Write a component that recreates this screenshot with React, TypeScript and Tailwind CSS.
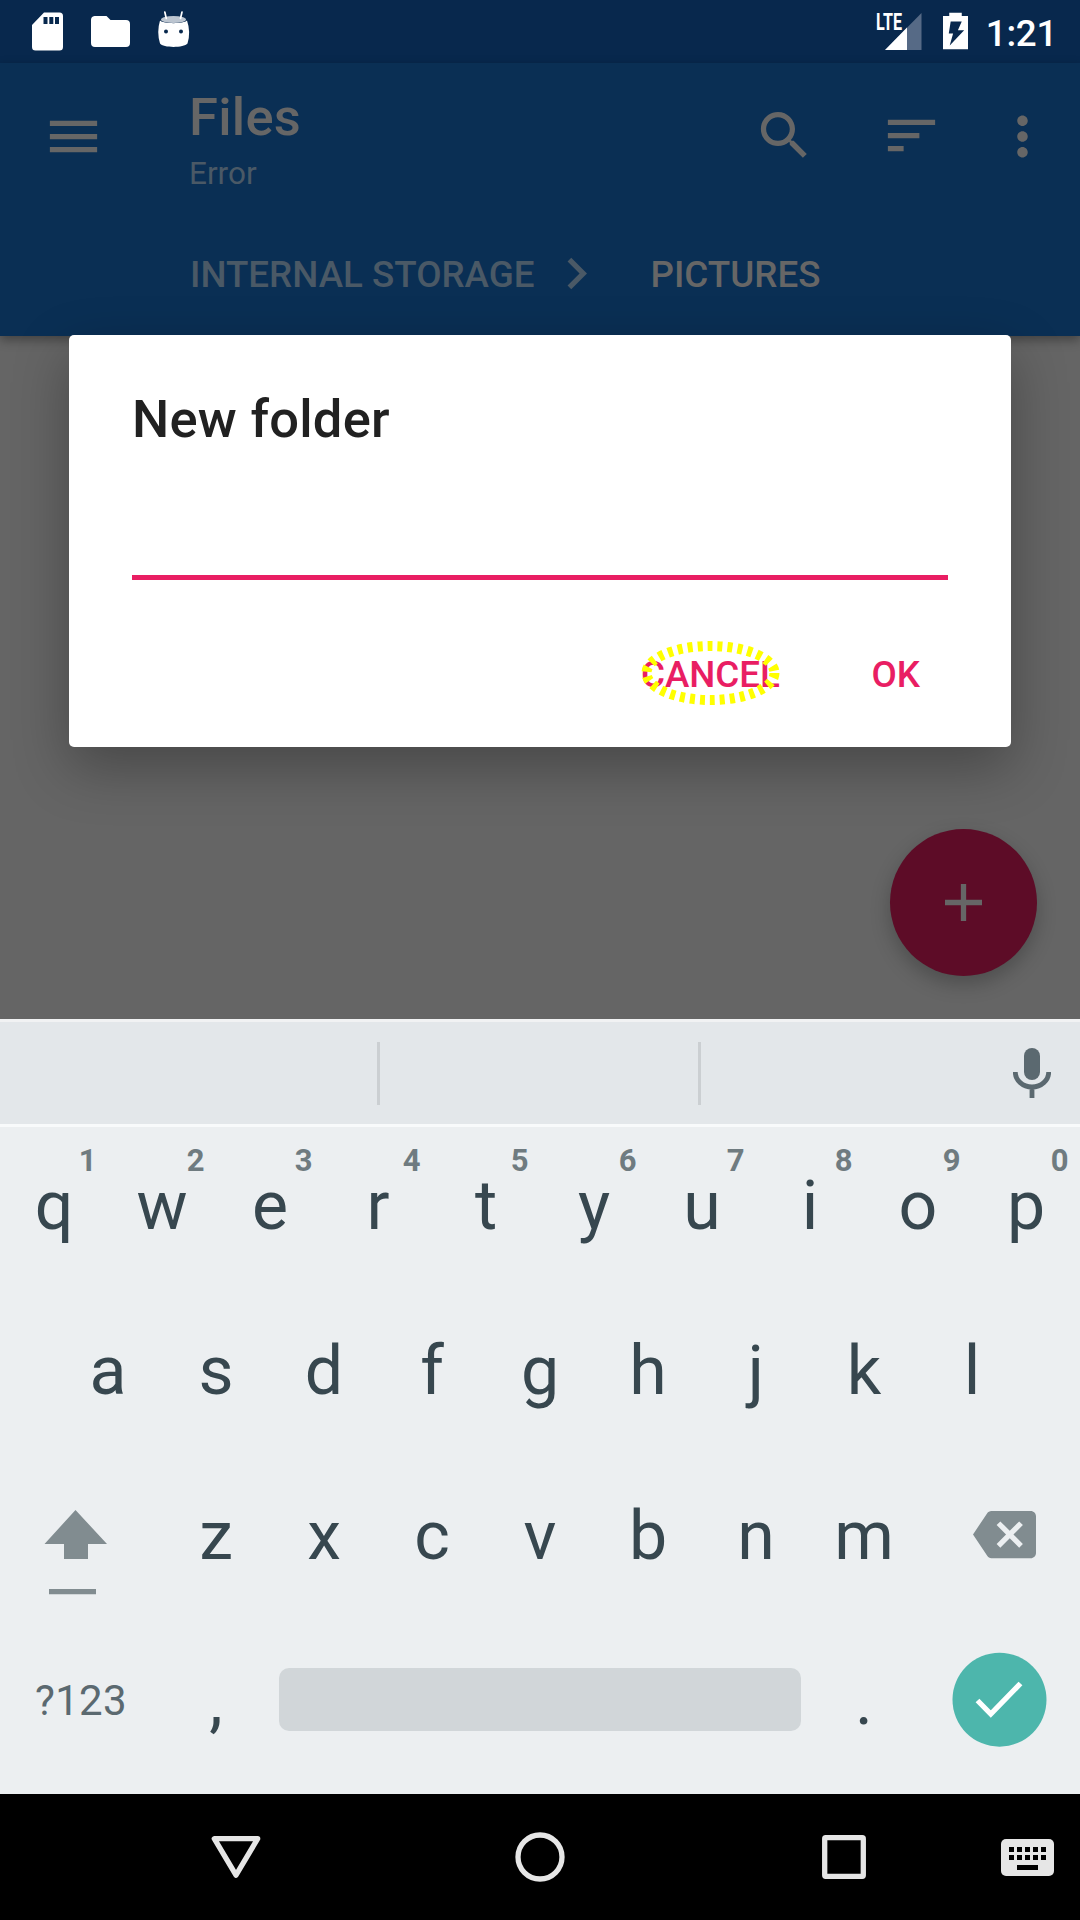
import type { ReactNode } from 'react';

const MENU = 'M3 18h18v-2H3v2zm0-5h18v-2H3v2zm0-7v2h18V6H3z';
const SEARCH =
  'M15.5 14h-.79l-.28-.27C15.41 12.59 16 11.11 16 9.5 16 5.91 13.09 3 9.5 3S3 5.91 3 9.5 5.91 16 9.5 16c1.61 0 3.09-.59 4.23-1.57l.27.28v.79l5 4.99L20.49 19l-4.99-5zm-6 0C7.01 14 5 11.99 5 9.5S7.01 5 9.5 5 14 7.01 14 9.5 11.99 14 9.5 14z';
const SORT = 'M3 18h6v-2H3v2zM3 6v2h18V6H3zm0 7h12v-2H3v2z';
const MORE =
  'M12 8c1.1 0 2-.9 2-2s-.9-2-2-2-2 .9-2 2 .9 2 2 2zm0 2c-1.1 0-2 .9-2 2s.9 2 2 2 2-.9 2-2-.9-2-2-2zm0 6c-1.1 0-2 .9-2 2s.9 2 2 2 2-.9 2-2-.9-2-2-2z';
const CHEVRON = 'M10 6L8.59 7.41 13.17 12l-4.58 4.59L10 18l6-6z';
const BACKSPACE =
  'M22 3H7c-.69 0-1.23.35-1.59.88L0 12l5.41 8.11c.36.53.9.89 1.59.89h15c1.1 0 2-.9 2-2V5c0-1.1-.9-2-2-2zm-3 12.59L17.59 17 14 13.41 10.41 17 9 15.59 12.59 12 9 8.41 10.41 7 14 10.59 17.59 7 19 8.41 15.41 12 19 15.59z';

function Icon({ d, className }: { d: string; className: string }) {
  return (
    <svg viewBox="0 0 24 24" fill="currentColor" className={`size-[63px] shrink-0 ${className}`}>
      <path d={d} />
    </svg>
  );
}

function StatusBar() {
  return (
    <header className="flex h-[63px] items-start bg-[#08284d] text-white">
      <svg viewBox="0 0 200 63" className="h-[63px] w-[200px]" fill="currentColor">
        <path
          fillRule="evenodd"
          d="M44 12.5h15.500a3.500 3.500 0 0 1 3.500 3.500v31a3.500 3.500 0 0 1-3.500 3.500h-24a3.500 3.500 0 0 1-3.500-3.500V25zM43.500 17v7h4v-7zM49.300 17v7h4v-7zM55 17v7h4v-7z"
        />
        <path d="M94.500 16h12l4 4H126a4 4 0 0 1 4 4v19a4 4 0 0 1-4 4H95a4 4 0 0 1-4-4V20a4 4 0 0 1 3.500-4z" />
        <path d="M160 20.500C163 24 184 24 187 20.500Q191 32 187.500 43.500C184 48 163 48 160 43.500Q156.500 32 160 20.500z" />
        <ellipse cx="173.500" cy="19.500" rx="12.500" ry="3.600" fill="#bcc5d0" />
        <path d="M164.800 12l1.500 6.500M182 12l-1.500 6.500" stroke="currentColor" strokeWidth="1.700" strokeLinecap="round" />
        <circle cx="166" cy="31.500" r="2" fill="#08284d" />
        <circle cx="181" cy="31.500" r="2" fill="#08284d" />
      </svg>
      <div className="ml-auto flex h-[63px] items-center pr-[23px]">
        <div className="relative h-[63px] w-[50px]">
          <span className="absolute left-0 top-[12px] origin-left scale-x-[0.7] text-[23px] font-bold leading-[22px]">LTE</span>
          <svg viewBox="0 0 50 63" className="h-[63px] w-[50px]">
            <path d="M45.500 13v37H9z" fill="#566a86" />
            <path d="M31 27.500V50H9z" fill="#fff" />
          </svg>
        </div>
        <svg viewBox="0 0 26 38" className="ml-[17px] mt-[-1px] h-[38px] w-[25px]">
          <path d="M6.500 0h13v3.500H26V38H0V3.500h6.500z" fill="#fff" />
          <path d="M8 9h11.500l-4 9.300H22L7 34l3.500-12.500H6z" fill="#08284d" />
        </svg>
        <span className="ml-[18px] mt-[5px] text-[36.750px] font-medium leading-[44px] tracking-[-0.300px]">1:21</span>
      </div>
    </header>
  );
}

function AppBar() {
  return (
    <div className="h-[273px] bg-[#0a2f54] text-[#666] shadow-[0_4px_10px_rgba(0,0,0,0.35)]">
      <div className="flex h-[147px] pt-[42px]">
        <Icon d={MENU} className="ml-[42px]" />
        <div className="-mt-[19px] ml-[84px] flex flex-col">
          <h1 className="text-[52.500px] font-medium leading-[62px] tracking-[0.250px]">Files</h1>
          <p className="mt-[7px] text-[31.500px] leading-[37px] text-[#4a5966]">Error</p>
        </div>
        <Icon d={SEARCH} className="-mt-px ml-auto" />
        <Icon d={SORT} className="-mt-px ml-[64px]" />
        <Icon d={MORE} className="ml-[48px] mr-[26px]" />
      </div>
      <nav className="flex h-[126px] items-center pl-[190px] pt-[3px] text-[36.750px] font-medium">
        <span className="text-[#4a5966]">INTERNAL STORAGE</span>
        <Icon d={CHEVRON} className="-mt-[2px] ml-[11px] text-[#4a5966]" />
        <span className="ml-[42px]">PICTURES</span>
      </nav>
    </div>
  );
}

function Dialog() {
  return (
    <div className="absolute left-[69px] top-[335px] flex h-[412px] w-[942px] flex-col rounded-[5px] bg-white px-[63px] pt-[53px] text-[#e91e63] shadow-[0_20px_56px_rgba(0,0,0,0.3)]">
      <h2 className="text-[52.500px] font-medium leading-[62px] tracking-[0.250px] text-[#212121]">New folder</h2>
      <div className="mt-[125px] h-[5px] bg-[#e91e63]" />
      <div className="mt-[73px] flex justify-end pr-[28px] text-[36.750px] font-medium leading-[44px]">
        <span className="relative">
          CANCEL
          <svg viewBox="0 0 140 66" className="absolute -left-px -top-[13px] h-[66px] w-[140px]" fill="none">
            <ellipse cx="70.500" cy="33" rx="64" ry="27" stroke="#ff0" strokeWidth="10" strokeDasharray="5 5" />
          </svg>
        </span>
        <span className="ml-[91.500px]">OK</span>
      </div>
    </div>
  );
}

function Key({ label, hint }: { label: string; hint?: string }) {
  return (
    <div className="relative flex w-[108px] justify-center">
      <span>{label}</span>
      {hint && (
        <span className="absolute right-[11.500px] top-[-23px] text-[31px] font-bold leading-[36px] text-[#6f7b80]">{hint}</span>
      )}
    </div>
  );
}

function Row({ children }: { children: ReactNode }) {
  return <div className="flex h-[165px] justify-center leading-[80px]">{children}</div>;
}

function Keyboard() {
  return (
    <section className="h-[775px] bg-[#eceff1] text-[#37474f]">
      <div className="flex h-[108px] items-center border-b-[3px] border-t-[3px] border-b-[#f8fafb] border-t-[#f1f2f3] bg-[#e3e7ea]">
        <div className="ml-[377px] h-[63px] w-[3px] bg-[#cbcfd2]" />
        <div className="ml-[318px] h-[63px] w-[3px] bg-[#cbcfd2]" />
        <svg viewBox="0 0 38 51" className="ml-auto mr-[29px] h-[51px] w-[38px] text-[#5b6970]" fill="none" stroke="currentColor">
          <rect x="11" y="0" width="16" height="32" rx="8" fill="currentColor" stroke="none" />
          <path d="M2.300 24a16.700 15 0 0 0 33.400 0M19 39v11" strokeWidth="4.800" />
        </svg>
      </div>
      <div className="pt-[39px] text-[68px]">
        <Row>
          {'qwertyuiop'.split('').map((k, i) => (
            <Key key={k} label={k} hint={String((i + 1) % 10)} />
          ))}
        </Row>
        <Row>
          {'asdfghjkl'.split('').map((k) => (
            <Key key={k} label={k} />
          ))}
        </Row>
        <Row>
          <div className="w-[162px]">
            <svg viewBox="0 0 162 100" className="h-[100px] w-[162px]" fill="#818c90">
              <path d="M75.500 14l31.500 34H88v15H64V48H44.500zM49 93h47v5.300H49z" />
            </svg>
          </div>
          {'zxcvbnm'.split('').map((k) => (
            <Key key={k} label={k} />
          ))}
          <div className="w-[162px] pl-[55px] pt-[7px]">
            <Icon d={BACKSPACE} className="text-[#818c90]" />
          </div>
        </Row>
        <Row>
          <div className="w-[162px] pl-[35px] text-[42px] tracking-[0.300px] text-[#5b6970]">?123</div>
          <Key label="," />
          <div className="mx-[9px] mt-[7px] h-[63px] w-[522px] rounded-[10px] bg-[#d1d6d9]" />
          <Key label="." />
          <div className="w-[162px] pl-[33.500px]">
            <svg viewBox="0 0 95 95" className="-mt-[9px] size-[95px]">
              <circle cx="47.500" cy="47.700" r="47" fill="#4db6ac" />
              <path d="M25.500 48.500l13.300 13.500L68.500 31.500" fill="none" stroke="#fff" strokeWidth="5.300" />
            </svg>
          </div>
        </Row>
      </div>
    </section>
  );
}

const KEY_COLUMNS = [8, 16, 24, 32, 40];

function NavBar() {
  return (
    <footer className="flex h-[126px] items-center bg-black text-[#e6e6e6]">
      <svg viewBox="0 0 50 50" className="ml-[211px] size-[50px]" fill="none" stroke="currentColor" strokeWidth="5.300" strokeLinejoin="round">
        <path d="M3.300 6.700h43.400L25 43.200z" />
      </svg>
      <svg viewBox="0 0 50 50" className="ml-[254px] size-[50px]" fill="none" stroke="currentColor" strokeWidth="5.300">
        <circle cx="25" cy="25" r="22" />
      </svg>
      <svg viewBox="0 0 44 44" className="ml-[257px] size-[44px]" fill="none" stroke="currentColor" strokeWidth="5.300">
        <rect x="2.700" y="2.700" width="38.600" height="38.600" rx="1" />
      </svg>
      <svg viewBox="0 0 53 37" className="ml-[135px] h-[37px] w-[53px]">
        <rect width="53" height="37" rx="5" fill="currentColor" />
        {KEY_COLUMNS.map((x) => (
          <path key={x} d={`M${x} 8h5v5h-5zM${x} 16h5v5h-5z`} fill="#000" />
        ))}
        <path d="M16 26h21v5H16z" fill="#000" />
      </svg>
    </footer>
  );
}

export default function App() {
  return (
    <div className="relative flex h-[1920px] w-[1080px] flex-col overflow-hidden bg-[#656565] font-[Roboto,sans-serif]">
      <StatusBar />
      <AppBar />
      <main className="flex h-[683px] items-end justify-end pb-[43px] pr-[43px]">
        <button className="flex size-[147px] items-center justify-center rounded-full bg-[#5d0c27] text-[#666] shadow-[0_8px_20px_rgba(0,0,0,0.24)]">
          <svg viewBox="0 0 37 37" className="size-[37px]" stroke="currentColor" strokeWidth="5.300">
            <path d="M0 18.500h37M18.500 0v37" />
          </svg>
        </button>
      </main>
      <Keyboard />
      <NavBar />
      <Dialog />
    </div>
  );
}
